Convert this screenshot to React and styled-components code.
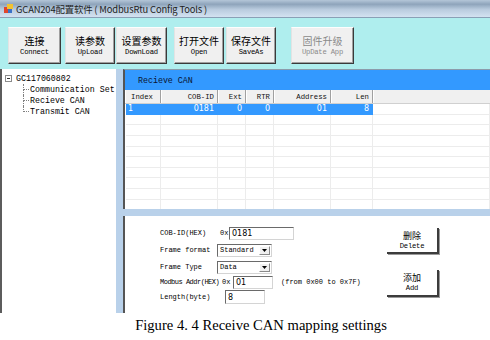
import React from "react";
import styled, { createGlobalStyle } from "styled-components";

const mono = `"Liberation Mono", "DejaVu Sans Mono", monospace`;
const cjk = `"Noto Sans CJK SC", "Liberation Sans", sans-serif`;

const GlobalStyle = createGlobalStyle`
  html, body { margin: 0; padding: 0; background: #fff; }
  body { width: 490px; height: 340px; overflow: hidden; }
`;

const Page = styled.div`
  width: 490px;
  height: 340px;
  display: flex;
  flex-direction: column;
  background: #fff;
`;

const Window = styled.div`
  height: 313px;
  display: flex;
  flex-direction: column;
`;

const TitleBar = styled.div`
  height: 18px;
  box-sizing: border-box;
  display: flex;
  align-items: center;
  gap: 3px;
  padding-left: 4px;
  background: linear-gradient(#b4c6d8 0%, #8ea4bb 25%, #b9cbde 55%, #d3e2f1 100%);
  border-bottom: 1px solid #8aa0b6;
`;

const TitleText = styled.span`
  font-family: ${cjk};
  font-size: 9.4px;
  color: #1e1e1e;
  letter-spacing: -0.15px;
  white-space: pre;
`;

const Toolbar = styled.div`
  height: 51px;
  box-sizing: border-box;
  display: flex;
  align-items: flex-start;
  padding: 9px 0 0 8px;
  background: #afeeee;
`;

const ToolButton = styled.div`
  width: ${(p) => p.w}px;
  height: 37px;
  margin-left: ${(p) => p.ml || 0}px;
  box-sizing: border-box;
  display: flex;
  flex-direction: column;
  align-items: center;
  justify-content: center;
  gap: 1px;
  background: #f0f0f0;
  border: 1px solid;
  border-color: #fdfdfd #3a3a3a #3a3a3a #e3e3e3;
  box-shadow: inset -1px -1px 0 #a0a0a0;
  color: ${(p) => (p.disabled ? "#8a8a8a" : "#000")};
`;

const ZhLabel = styled.span`
  font-family: ${cjk};
  font-size: ${(p) => p.size || 10}px;
  line-height: 12px;
`;

const EnLabel = styled.span`
  font-family: ${mono};
  font-size: 7.2px;
  line-height: 9px;
  letter-spacing: -0.2px;
`;

const Body = styled.div`
  flex: 1;
  display: flex;
  background: #b9d1ea;
`;

const TreePanel = styled.div`
  width: 116px;
  box-sizing: border-box;
  border-left: 2px solid #5c5c5c;
  background: #fff;
  padding-top: 4px;
  font-family: ${mono};
  font-size: 8.3px;
  color: #000;
`;

const TreeRow = styled.div`
  height: 11px;
  display: flex;
  align-items: center;
  padding-left: ${(p) => p.indent || 0}px;
  white-space: nowrap;
`;

const Expander = styled.span`
  width: 7px;
  height: 7px;
  box-sizing: border-box;
  border: 1px solid #8c8c8c;
  display: flex;
  align-items: center;
  justify-content: center;
  margin-right: 4px;
  &::before {
    content: "";
    width: 3px;
    height: 1px;
    background: #333;
  }
`;

const Connector = styled.span`
  width: 6px;
  height: 11px;
  display: flex;
  flex-direction: column;
  margin-right: 1px;
`;

const ConnUpper = styled.span`
  height: 5px;
  border-left: 1px dotted #808080;
  border-bottom: 1px dotted #808080;
`;

const ConnLower = styled.span`
  height: 5px;
  border-left: 1px dotted ${(p) => (p.last ? "transparent" : "#808080")};
`;

const Main = styled.div`
  flex: 1;
  display: flex;
  flex-direction: column;
  margin-left: 7px;
`;

const ListPanel = styled.div`
  height: 140px;
  box-sizing: border-box;
  background: #fff;
  border-left: 2px solid #555;
  border-top: 1px solid #8c9cab;
  display: flex;
  flex-direction: column;
  overflow: hidden;
`;

const PanelHeader = styled.div`
  height: 20px;
  flex: none;
  display: flex;
  align-items: center;
  padding-left: 13px;
  background: #3399ff;
  font-family: ${mono};
  font-size: 8.3px;
  color: #0a1430;
`;

const columns = "36px 57px 28px 28px 57px 42px 1fr";

const HeadRow = styled.div`
  display: grid;
  grid-template-columns: ${columns};
  height: 13px;
  flex: none;
  background: #f0f0f0;
  border-bottom: 1px solid #d0d0d0;
`;

const HeadCell = styled.div`
  box-sizing: border-box;
  display: flex;
  align-items: center;
  justify-content: ${(p) => (p.left ? "flex-start" : "flex-end")};
  padding: 0 ${(p) => (p.left ? 0 : 3)}px 0 ${(p) => (p.left ? 6 : 0)}px;
  border-right: 1px solid #a0a0a0;
  box-shadow: inset 1px 0 0 #fff;
  font-family: ${mono};
  font-size: 7.3px;
  color: #111;
  &:last-child { border-right: none; }
`;

const DataRow = styled.div`
  display: grid;
  grid-template-columns: ${columns};
  height: 10.65px;
  flex: none;
`;

const DataCell = styled.div`
  box-sizing: border-box;
  display: flex;
  align-items: center;
  justify-content: ${(p) => (p.left ? "flex-start" : "flex-end")};
  padding: 0 ${(p) => (p.left ? 0 : 3)}px 0 ${(p) => (p.left ? 2 : 0)}px;
  margin-left: ${(p) => (p.first ? 1 : 0)}px;
  background: ${(p) => (p.selected ? "#3399ff" : "#fff")};
  color: ${(p) => (p.selected ? "#fff" : "#000")};
  border-right: 1px solid ${(p) => (p.selected ? "#3399ff" : "#ececec")};
  border-bottom: 1px solid ${(p) => (p.selected ? "#3399ff" : "#ececec")};
  font-family: "DejaVu Sans", "Liberation Sans", sans-serif;
  font-size: 8px;
`;

const HSplit = styled.div`
  height: 7px;
  flex: none;
`;

const EditPanel = styled.div`
  flex: 1;
  display: flex;
  background: #fff;
  border-left: 2px solid #555;
`;

const Form = styled.div`
  width: 262px;
  box-sizing: border-box;
  padding: 10px 0 0 35px;
  display: flex;
  flex-direction: column;
`;

const FieldRow = styled.div`
  height: 14px;
  margin-top: ${(p) => p.mt || 0}px;
  display: flex;
  align-items: center;
  font-family: ${mono};
  font-size: 7px;
  color: #000;
  white-space: nowrap;
`;

const FieldLabel = styled.span`
  width: ${(p) => p.w}px;
  flex: none;
  letter-spacing: ${(p) => p.ls || 0}px;
`;

const Prefix = styled.span`
  width: ${(p) => p.w}px;
  flex: none;
`;

const TextBox = styled.div`
  width: ${(p) => p.w}px;
  height: ${(p) => p.h || 13}px;
  box-sizing: border-box;
  display: flex;
  align-items: center;
  padding-left: 2px;
  border: 1px solid;
  border-color: #6a6a6a #d4d4d4 #d4d4d4 #6a6a6a;
  font-family: "DejaVu Sans", "Liberation Sans", sans-serif;
  font-size: 8px;
`;

const Select = styled.div`
  width: 55px;
  height: 13px;
  box-sizing: border-box;
  display: flex;
  align-items: center;
  justify-content: space-between;
  padding: 0 1px 0 2px;
  border: 1px solid;
  border-color: #6a6a6a #d4d4d4 #d4d4d4 #6a6a6a;
  font-family: ${mono};
  font-size: 7px;
`;

const DropButton = styled.span`
  width: 11px;
  height: 9px;
  box-sizing: border-box;
  display: flex;
  align-items: center;
  justify-content: center;
  background: #f0f0f0;
  border: 1px solid;
  border-color: #fff #8a8a8a #8a8a8a #fff;
`;

const Note = styled.span`
  margin-left: 8px;
`;

const Actions = styled.div`
  display: flex;
  flex-direction: column;
  gap: 16px;
  padding-top: 12px;
`;

const ActionButton = styled.div`
  width: 52px;
  height: ${(p) => p.h}px;
  box-sizing: border-box;
  display: flex;
  flex-direction: column;
  align-items: center;
  justify-content: center;
  background: #fff;
  border-right: 2px solid #3c3c3c;
  border-bottom: 2px solid #3c3c3c;
  box-shadow: 1px 1px 0 #9a9a9a;
`;

const Caption = styled.div`
  flex: 1;
  padding-left: 32px;
  text-align: center;
  font-family: "Liberation Serif", "Times New Roman", serif;
  font-size: 14.6px;
  line-height: 25px;
  color: #000;
`;

function AppIcon() {
  return (
    <svg width="9" height="9" viewBox="0 0 9 9">
      <rect x="0" y="3" width="4" height="6" fill="#e0452c" />
      <rect x="3" y="0" width="6" height="5" fill="#f2c230" />
      <rect x="4" y="5" width="4" height="4" fill="#3a72c8" />
    </svg>
  );
}

function DownArrow() {
  return (
    <svg width="5" height="3" viewBox="0 0 5 3">
      <path d="M0 0 L5 0 L2.5 3 Z" fill="#000" />
    </svg>
  );
}

const tools = [
  { zh: "连接", en: "Connect", w: 53, ml: 0 },
  { zh: "读参数", en: "UpLoad", w: 50, ml: 4 },
  { zh: "设置参数", en: "DownLoad", w: 51, ml: 1 },
  { zh: "打开文件", en: "Open", w: 50, ml: 7 },
  { zh: "保存文件", en: "SaveAs", w: 50, ml: 2 },
  { zh: "固件升级", en: "UpDate App", w: 63, ml: 15, disabled: true },
];

const heads = [
  { t: "Index", left: true },
  { t: "COB-ID" },
  { t: "Ext" },
  { t: "RTR" },
  { t: "Address" },
  { t: "Len" },
  { t: "" },
];

const record = ["1", "0181", "0", "0", "01", "8"];

export default function App() {
  const emptyRows = Array.from({ length: 9 });

  return (
    <Page>
      <GlobalStyle />
      <Window>
        <TitleBar>
          <AppIcon />
          <TitleText>GCAN204配置软件 ( ModbusRtu Config Tools )</TitleText>
        </TitleBar>

        <Toolbar>
          {tools.map((b) => (
            <ToolButton key={b.en} w={b.w} ml={b.ml} disabled={b.disabled}>
              <ZhLabel>{b.zh}</ZhLabel>
              <EnLabel>{b.en}</EnLabel>
            </ToolButton>
          ))}
        </Toolbar>

        <Body>
          <TreePanel>
            <TreeRow indent={3}>
              <Expander />
              GC117060802
            </TreeRow>
            {["Communication Set", "Recieve CAN", "Transmit CAN"].map((name, i, arr) => (
              <TreeRow key={name} indent={21}>
                <Connector>
                  <ConnUpper />
                  <ConnLower last={i === arr.length - 1} />
                </Connector>
                {name}
              </TreeRow>
            ))}
          </TreePanel>

          <Main>
            <ListPanel>
              <PanelHeader>Recieve CAN</PanelHeader>
              <HeadRow>
                {heads.map((h, i) => (
                  <HeadCell key={i} left={h.left}>
                    {h.t}
                  </HeadCell>
                ))}
              </HeadRow>
              <DataRow>
                {record.map((v, i) => (
                  <DataCell key={i} selected left={i === 0} first={i === 0}>
                    {v}
                  </DataCell>
                ))}
                <DataCell />
              </DataRow>
              {emptyRows.map((_, r) => (
                <DataRow key={r}>
                  {heads.map((h, i) => (
                    <DataCell key={i} first={i === 0} />
                  ))}
                </DataRow>
              ))}
            </ListPanel>

            <HSplit />

            <EditPanel>
              <Form>
                <FieldRow>
                  <FieldLabel w={60}>COB-ID(HEX)</FieldLabel>
                  <Prefix w={9}>0x</Prefix>
                  <TextBox w={65}>0181</TextBox>
                </FieldRow>
                <FieldRow mt={3}>
                  <FieldLabel w={57}>Frame format</FieldLabel>
                  <Select>
                    Standard
                    <DropButton>
                      <DownArrow />
                    </DropButton>
                  </Select>
                </FieldRow>
                <FieldRow mt={3}>
                  <FieldLabel w={57}>Frame Type</FieldLabel>
                  <Select>
                    Data
                    <DropButton>
                      <DownArrow />
                    </DropButton>
                  </Select>
                </FieldRow>
                <FieldRow mt={1}>
                  <FieldLabel w={62} ls={-0.5}>Modbus Addr(HEX)</FieldLabel>
                  <Prefix w={11}>0x</Prefix>
                  <TextBox w={40}>01</TextBox>
                  <Note>(from 0x00 to 0x7F)</Note>
                </FieldRow>
                <FieldRow mt={1}>
                  <FieldLabel w={65}>Length(byte)</FieldLabel>
                  <TextBox w={40} h={14}>8</TextBox>
                </FieldRow>
              </Form>

              <Actions>
                <ActionButton h={26}>
                  <ZhLabel size={9}>删除</ZhLabel>
                  <EnLabel>Delete</EnLabel>
                </ActionButton>
                <ActionButton h={27}>
                  <ZhLabel size={9}>添加</ZhLabel>
                  <EnLabel>Add</EnLabel>
                </ActionButton>
              </Actions>
            </EditPanel>
          </Main>
        </Body>
      </Window>

      <Caption>Figure 4. 4 Receive CAN mapping settings</Caption>
    </Page>
  );
}
